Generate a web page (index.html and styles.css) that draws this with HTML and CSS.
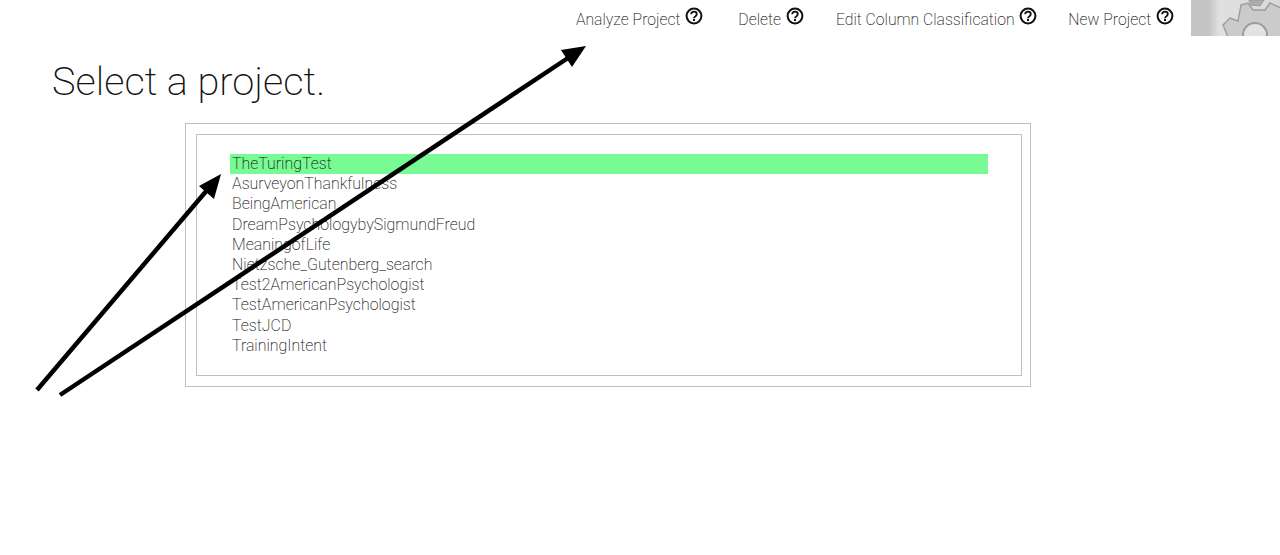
FILE: index.html
```html
<!DOCTYPE html>
<html lang="en">
<head>
    <meta charset="UTF-8">
    <meta name="viewport" content="width=device-width, initial-scale=1.0">
    <title>Select a project</title>
    <link rel="stylesheet" href="styles.css">
</head>
<body>
    <svg width="0" height="0" class="defs">
        <symbol id="help" viewBox="0 0 18 18">
            <circle cx="9" cy="9" r="7.4" fill="none" stroke="#111" stroke-width="2"/>
            <path d="M6.2 7.2c0-1.6 1.2-2.6 2.8-2.6s2.8 1 2.8 2.4c0 1.2-.7 1.8-1.6 2.4-.8.5-1.2 1-1.2 1.9" fill="none" stroke="#111" stroke-width="1.8"/>
            <rect x="8" y="12" width="2" height="2" fill="#111"/>
        </symbol>
    </svg>

    <header class="topbar">
        <nav class="menu">
            <a class="menu-item item-analyze">Analyze Project <svg class="help"><use href="#help"/></svg></a>
            <a class="menu-item item-delete">Delete <svg class="help"><use href="#help"/></svg></a>
            <a class="menu-item item-edit">Edit Column Classification <svg class="help"><use href="#help"/></svg></a>
            <a class="menu-item item-new">New Project <svg class="help"><use href="#help"/></svg></a>
        </nav>
        <div class="gear-box">
            <svg width="89" height="36" viewBox="0 0 89 36">
                <polygon points="58,0 60,5 69,6 73,0" fill="#adadad" stroke="#999" stroke-width="1"/>
                <polygon points="37,37 32,25 39,18 47,21 50,5 57,3 62,10 74,10 79,3 90,8 90,37" fill="#cbcbcb" stroke="#9c9c9c" stroke-width="1.4"/>
                <circle cx="64" cy="35" r="12" fill="#e2e2e2" stroke="#9c9c9c" stroke-width="2"/>
            </svg>
        </div>
    </header>

    <h1 class="page-title">Select a project.</h1>

    <div class="outer-box">
        <div class="inner-box">
            <ul class="project-list">
                <li class="selected">TheTuringTest</li>
                <li>AsurveyonThankfulness</li>
                <li>BeingAmerican</li>
                <li>DreamPsychologybySigmundFreud</li>
                <li>MeaningofLife</li>
                <li>Nietzsche_Gutenberg_search</li>
                <li>Test2AmericanPsychologist</li>
                <li>TestAmericanPsychologist</li>
                <li>TestJCD</li>
                <li>TrainingIntent</li>
            </ul>
        </div>
    </div>

    <!-- arrows drawn on top of the screenshot -->
    <svg class="arrows" width="1280" height="555" viewBox="0 0 1280 555">
        <line x1="37" y1="390" x2="208" y2="189" stroke="#000" stroke-width="4.5"/>
        <polygon points="221,174 214,199 199,186" fill="#000"/>
        <line x1="60" y1="395" x2="568" y2="58" stroke="#000" stroke-width="4.5"/>
        <polygon points="586,46 572,67 561,50" fill="#000"/>
    </svg>
</body>
</html>
```

FILE: styles.css
```css
body {
    font-family: Roboto, "Liberation Sans", sans-serif;
    font-weight: 200;
    margin: 0;
    padding: 0;
    background-color: #fff;
    color: #111;
    position: relative;
    height: 555px;
    overflow: hidden;
}
.defs {
    display: block;
    height: 0;
}
.topbar {
    display: flex;
    justify-content: flex-end;
    height: 36px;
}
.menu {
    display: flex;
    align-items: flex-start;
    padding-top: 8px;
}
.menu-item {
    display: flex;
    font-size: 15.75px;
    line-height: 24px;
    white-space: pre;
    color: #111;
}
.item-analyze {
    margin-right: 35px;
}
.item-delete {
    margin-right: 32px;
}
.item-edit {
    margin-right: 31px;
}
.item-new {
    margin-right: 17px;
}
.help {
    width: 18px;
    height: 18px;
    margin-top: -1px;
    margin-left: 1px;
}
.gear-box {
    width: 89px;
    height: 36px;
    background: linear-gradient(90deg, #c4c4c4 0, #c4c4c4 18px, #e0e0e0 28px, #d8d8d8);
}
.page-title {
    font-size: 39.7px;
    font-weight: 200;
    line-height: 48px;
    margin: 22px 0 17px 52px;
    color: #111;
}
.outer-box {
    width: 844px;
    height: 262px;
    margin-left: 185px;
    border: 1px solid #c0c0c0;
    padding: 0;
    display: flex;
    align-items: center;
}
.inner-box {
    width: 824px;
    height: 240px;
    margin-left: 10px;
    border: 1px solid #c0c0c0;
}
.project-list {
    list-style: none;
    margin: 19px 33px 0;
    padding: 0;
    width: 758px;
}
.project-list li {
    height: 20.2px;
    line-height: 20.2px;
    font-size: 15.9px;
    padding-left: 2px;
    color: #111;
}
.project-list .selected {
    background-color: #78fa94;
}
.arrows {
    position: absolute;
    top: 0;
    left: 0;
    pointer-events: none;
}
```
